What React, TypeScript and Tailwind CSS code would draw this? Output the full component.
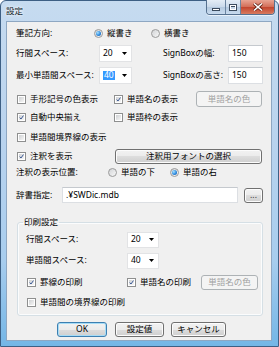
import React from 'react';

const Check = ({ on }: { on?: boolean }) => (
  <span className="flex h-[9px] w-[9px] shrink-0 items-center justify-center border border-[#8e8f8f] bg-white p-[1px]">
    <span className="flex h-full w-full items-center justify-center bg-gradient-to-br from-[#cfd1d3] to-[#f6f6f6]">
      {on && (
        <svg width="7" height="7" viewBox="0 0 7 7">
          <path d="M1 3.6 L2.8 5.6 L6.2 0.8" fill="none" stroke="#2f4f8f" strokeWidth="1.3" />
        </svg>
      )}
    </span>
  </span>
);

const CheckItem = ({ on, label, className = '' }: { on?: boolean; label: string; className?: string }) => (
  <div className={`flex items-center gap-[4px] ${className}`}>
    <Check on={on} />
    <span className="whitespace-nowrap">{label}</span>
  </div>
);

const Radio = ({ on }: { on?: boolean }) => (
  <span className="flex h-[9px] w-[9px] shrink-0 items-center justify-center rounded-full border border-[#9a9a9a] bg-gradient-to-br from-[#d2d4d6] to-[#f8f8f8]">
    {on && <span className="h-[5px] w-[5px] rounded-full bg-[radial-gradient(circle_at_35%_35%,#a9e3ff,#2d8ae0_55%,#17509a)]" />}
  </span>
);

const RadioItem = ({ on, label, className = '' }: { on?: boolean; label: string; className?: string }) => (
  <div className={`flex items-center gap-[4px] ${className}`}>
    <Radio on={on} />
    <span className="whitespace-nowrap">{label}</span>
  </div>
);

const Btn = ({
  children,
  disabled,
  def,
  className = '',
}: {
  children: React.ReactNode;
  disabled?: boolean;
  def?: boolean;
  className?: string;
}) => {
  const look = disabled
    ? 'border-[#adb2b5] bg-[#f4f4f4] text-[#a0a0a0]'
    : def
      ? 'border-[#3c7fb1] bg-[linear-gradient(#f2f2f2,#ebebeb_50%,#dddddd_50%,#cfcfcf)] shadow-[inset_0_0_0_1px_#a6dcf6]'
      : 'border-[#707070] bg-[linear-gradient(#f2f2f2,#ebebeb_50%,#dddddd_50%,#cfcfcf)] shadow-[inset_0_0_0_1px_#fcfcfc]';
  return (
    <div className={`flex shrink-0 items-center justify-center rounded-[3px] border ${look} ${className}`}>
      {children}
    </div>
  );
};

const Combo = ({ value, selected, className = '' }: { value: string; selected?: boolean; className?: string }) => (
  <div className={`flex shrink-0 items-center justify-between border border-[#e2e3e5] bg-white pl-[3px] pr-[4px] ${className}`}>
    <span className={selected ? 'bg-[#3399ff] px-[1px] text-white' : ''}>{value}</span>
    <svg width="5" height="3" viewBox="0 0 5 3">
      <path d="M0 0 H5 L2.5 3 Z" fill="#000" />
    </svg>
  </div>
);

const TextBox = ({ value, className = '' }: { value: string; className?: string }) => (
  <div className={`flex shrink-0 items-center border border-[#dcdfe3] border-t-[#c5c9ce] bg-white px-[3px] ${className}`}>
    {value}
  </div>
);

const WinButtons = () => (
  <div className="-mt-[1px] mr-[3px] flex h-[15px] self-start overflow-hidden rounded-b-[4px] border border-t-0 border-[#55708f] shadow-[0_1px_0_#e8f1fa]">
    <div className="flex w-[19px] items-center justify-center border-r border-[#6b84a0] bg-[linear-gradient(#e4edf6,#c9d9ea_50%,#b3c8de_50%,#c8dbef)]">
      <span className="mt-[4px] h-[3px] w-[8px] border border-[#3b4b5e] bg-white" />
    </div>
    <div className="flex w-[15px] items-center justify-center border-r border-[#6b84a0] bg-[linear-gradient(#e4edf6,#c9d9ea_50%,#b3c8de_50%,#c8dbef)]">
      <span className="h-[7px] w-[8px] border border-[#3b4b5e] bg-white p-[1px]">
        <span className="block h-full w-full border-t border-[#3b4b5e] bg-[#c9d9ea]" />
      </span>
    </div>
    <div className="flex w-[33px] items-center justify-center bg-[linear-gradient(#e8a493,#d26c56_50%,#c2432c_50%,#d77a5f)]">
      <svg width="10" height="8" viewBox="0 0 10 8">
        <path d="M1 0.5 L9 7.5 M9 0.5 L1 7.5" stroke="#5b1d12" strokeWidth="3" />
        <path d="M1 0.5 L9 7.5 M9 0.5 L1 7.5" stroke="#fff" strokeWidth="1.6" />
      </svg>
    </div>
  </div>
);

export default function App() {
  return (
    <div className="h-[347px] w-[279px] rounded-t-[6px] border border-[#3d5f84] bg-[linear-gradient(#c6dbf0,#b9d3ee_40%,#a8cdee_75%,#74b6e6)] pl-[5px] font-['Noto_Sans','Noto_Sans_CJK_JP',sans-serif] text-[8.5px] leading-none text-black">
      <div className="flex h-[20px] items-center justify-between">
        <span className="text-[#0f1d2c] [text-shadow:0_0_4px_#fff,0_0_2px_#fff]">設定</span>
        <WinButtons />
      </div>

      <div className="flex h-[320px] w-[266px] flex-col border border-[#8ea7c2] bg-[#f0f0f0] pl-[9px] pr-[8px] pt-[4px]">
        {/* 筆記方向 */}
        <div className="flex h-[14px] items-center">
          <span className="w-[78px]">筆記方向:</span>
          <RadioItem on label="縦書き" className="w-[57px]" />
          <RadioItem label="横書き" />
        </div>

        {/* 行間 / SignBox */}
        <div className="mt-[5px] flex h-[17px] items-center">
          <span className="w-[83px]">行間スペース:</span>
          <Combo value="20" className="h-[17px] w-[33px]" />
          <span className="ml-[31px] w-[65px]">SignBoxの幅:</span>
          <TextBox value="150" className="h-[17px] w-[35px]" />
        </div>
        <div className="mt-[5px] flex h-[17px] items-center">
          <span className="w-[83px]">最小単語間スペース:</span>
          <Combo value="40" selected className="h-[17px] w-[33px]" />
          <span className="ml-[31px] w-[65px]">SignBoxの高さ:</span>
          <TextBox value="150" className="h-[17px] w-[35px]" />
        </div>

        {/* checkboxes */}
        <div className="mt-[7px] flex h-[16px] items-center pl-[1px]">
          <CheckItem label="手形記号の色表示" className="w-[97px]" />
          <CheckItem on label="単語名の表示" className="w-[82px]" />
          <Btn disabled className="h-[16px] w-[66px]">単語名の色</Btn>
        </div>
        <div className="mt-[3px] flex h-[14px] items-center pl-[1px]">
          <CheckItem on label="自動中央揃え" className="w-[97px]" />
          <CheckItem label="単語枠の表示" />
        </div>
        <div className="mt-[6px] flex h-[14px] items-center pl-[1px]">
          <CheckItem label="単語間境界線の表示" />
        </div>
        <div className="mt-[5px] flex h-[15px] items-center pl-[1px]">
          <CheckItem on label="注釈を表示" className="w-[98px]" />
          <Btn className="h-[15px] w-[147px]">注釈用フォントの選択</Btn>
        </div>
        <div className="mt-[2px] flex h-[12px] items-center">
          <span className="w-[92px]">注釈の表示位置:</span>
          <RadioItem label="単語の下" className="w-[62px]" />
          <RadioItem on label="単語の右" />
        </div>

        {/* 辞書 */}
        <div className="mt-[9px] flex h-[16px] items-center">
          <span className="w-[46px]">辞書指定:</span>
          <TextBox value=".¥SWDic.mdb" className="h-[16px] w-[176px]" />
          <Btn className="ml-[6px] h-[15px] w-[19px] text-[#333]">...</Btn>
        </div>

        {/* 印刷設定 */}
        <fieldset className="ml-[1px] mt-[14px] h-[99px] w-[246px] rounded-[3px] border border-[#d5dfe5] p-0 shadow-[inset_0_0_0_1px_#fbfcfd]">
          <legend className="ml-[5px] px-[1px] leading-[10px]">印刷設定</legend>
          <div className="flex flex-col pl-[8px] pt-[5px]">
            <div className="flex h-[15px] items-center">
              <span className="w-[101px]">行間スペース:</span>
              <Combo value="20" className="h-[16px] w-[32px]" />
            </div>
            <div className="mt-[6px] flex h-[15px] items-center">
              <span className="w-[101px]">単語間スペース:</span>
              <Combo value="40" className="h-[16px] w-[32px]" />
            </div>
            <div className="mt-[7px] flex h-[15px] items-center pl-[1px]">
              <CheckItem on label="罫線の印刷" className="w-[100px]" />
              <CheckItem on label="単語名の印刷" className="w-[74px]" />
              <Btn disabled className="h-[15px] w-[57px]">単語名の色</Btn>
            </div>
            <div className="mt-[5px] flex h-[14px] items-center pl-[1px]">
              <CheckItem label="単語間の境界線の印刷" />
            </div>
          </div>
        </fieldset>

        {/* bottom buttons */}
        <div className="mt-[6px] flex h-[15px] items-center pl-[41px]">
          <Btn def className="h-[15px] w-[50px]">OK</Btn>
          <Btn className="ml-[8px] h-[15px] w-[49px]">設定値</Btn>
          <Btn className="ml-[7px] h-[15px] w-[55px]">キャンセル</Btn>
        </div>
      </div>
    </div>
  );
}
